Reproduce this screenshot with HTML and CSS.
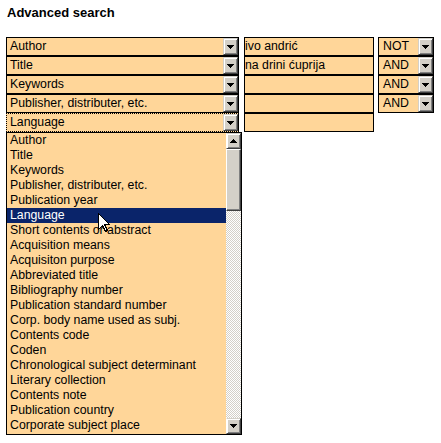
FILE: index.html
```html
<!DOCTYPE html>
<html>
<head>
<meta charset="utf-8">
<link rel="stylesheet" href="styles.css">
</head>
<body>
<div class="page">
  <h1 class="title">Advanced search</h1>
  <div class="form">
    <div class="row">
      <div class="combo field"><span class="combo-text">Author</span><span class="btn"><svg class="arrow" width="7" height="4" viewBox="0 0 7 4"><rect x="0" y="0" width="7" height="1"/><rect x="1" y="1" width="5" height="1"/><rect x="2" y="2" width="3" height="1"/><rect x="3" y="3" width="1" height="1"/></svg></span></div>
      <div class="textbox">ivo andrić</div>
      <div class="combo op"><span class="combo-text">NOT</span><span class="btn"><svg class="arrow" width="7" height="4" viewBox="0 0 7 4"><rect x="0" y="0" width="7" height="1"/><rect x="1" y="1" width="5" height="1"/><rect x="2" y="2" width="3" height="1"/><rect x="3" y="3" width="1" height="1"/></svg></span></div>
    </div>
    <div class="row">
      <div class="combo field"><span class="combo-text">Title</span><span class="btn"><svg class="arrow" width="7" height="4" viewBox="0 0 7 4"><rect x="0" y="0" width="7" height="1"/><rect x="1" y="1" width="5" height="1"/><rect x="2" y="2" width="3" height="1"/><rect x="3" y="3" width="1" height="1"/></svg></span></div>
      <div class="textbox">na drini ćuprija</div>
      <div class="combo op"><span class="combo-text">AND</span><span class="btn"><svg class="arrow" width="7" height="4" viewBox="0 0 7 4"><rect x="0" y="0" width="7" height="1"/><rect x="1" y="1" width="5" height="1"/><rect x="2" y="2" width="3" height="1"/><rect x="3" y="3" width="1" height="1"/></svg></span></div>
    </div>
    <div class="row">
      <div class="combo field"><span class="combo-text">Keywords</span><span class="btn"><svg class="arrow" width="7" height="4" viewBox="0 0 7 4"><rect x="0" y="0" width="7" height="1"/><rect x="1" y="1" width="5" height="1"/><rect x="2" y="2" width="3" height="1"/><rect x="3" y="3" width="1" height="1"/></svg></span></div>
      <div class="textbox"></div>
      <div class="combo op"><span class="combo-text">AND</span><span class="btn"><svg class="arrow" width="7" height="4" viewBox="0 0 7 4"><rect x="0" y="0" width="7" height="1"/><rect x="1" y="1" width="5" height="1"/><rect x="2" y="2" width="3" height="1"/><rect x="3" y="3" width="1" height="1"/></svg></span></div>
    </div>
    <div class="row">
      <div class="combo field"><span class="combo-text">Publisher, distributer, etc.</span><span class="btn"><svg class="arrow" width="7" height="4" viewBox="0 0 7 4"><rect x="0" y="0" width="7" height="1"/><rect x="1" y="1" width="5" height="1"/><rect x="2" y="2" width="3" height="1"/><rect x="3" y="3" width="1" height="1"/></svg></span></div>
      <div class="textbox"></div>
      <div class="combo op"><span class="combo-text">AND</span><span class="btn"><svg class="arrow" width="7" height="4" viewBox="0 0 7 4"><rect x="0" y="0" width="7" height="1"/><rect x="1" y="1" width="5" height="1"/><rect x="2" y="2" width="3" height="1"/><rect x="3" y="3" width="1" height="1"/></svg></span></div>
    </div>
    <div class="row">
      <div class="combo field focused"><span class="combo-text">Language</span><span class="btn"><svg class="arrow" width="7" height="4" viewBox="0 0 7 4"><rect x="0" y="0" width="7" height="1"/><rect x="1" y="1" width="5" height="1"/><rect x="2" y="2" width="3" height="1"/><rect x="3" y="3" width="1" height="1"/></svg></span></div>
      <div class="textbox"></div>
    </div>
    <div class="list">
      <ul class="items">
        <li>Author</li>
        <li>Title</li>
        <li>Keywords</li>
        <li>Publisher, distributer, etc.</li>
        <li>Publication year</li>
        <li class="selected">Language</li>
        <li>Short contents or abstract</li>
        <li>Acquisition means</li>
        <li>Acquisiton purpose</li>
        <li>Abbreviated title</li>
        <li>Bibliography number</li>
        <li>Publication standard number</li>
        <li>Corp. body name used as subj.</li>
        <li>Contents code</li>
        <li>Coden</li>
        <li>Chronological subject determinant</li>
        <li>Literary collection</li>
        <li>Contents note</li>
        <li>Publication country</li>
        <li>Corporate subject place</li>
      </ul>
      <div class="scrollbar">
        <span class="sbtn"><svg class="arrow" width="7" height="4" viewBox="0 0 7 4"><rect x="3" y="0" width="1" height="1"/><rect x="2" y="1" width="3" height="1"/><rect x="1" y="2" width="5" height="1"/><rect x="0" y="3" width="7" height="1"/></svg></span>
        <span class="thumb"></span>
        <span class="track"></span>
        <span class="sbtn"><svg class="arrow" width="7" height="4" viewBox="0 0 7 4"><rect x="0" y="0" width="7" height="1"/><rect x="1" y="1" width="5" height="1"/><rect x="2" y="2" width="3" height="1"/><rect x="3" y="3" width="1" height="1"/></svg></span>
      </div>
    </div>
  </div>
  <svg class="cursor" width="13" height="20" viewBox="0 0 13 20"><path d="M0.5 0.5 V16.5 L4.5 12.5 L7.5 18.5 L9.5 17.5 L6.5 11.5 H11.5 Z" fill="#fff" stroke="#000" stroke-width="1" shape-rendering="crispEdges"/></svg>
</div>
</body>
</html>
```

FILE: styles.css
```css
* { box-sizing: border-box; }
html, body { margin: 0; padding: 0; background: #fff; }
body { font-family: "Liberation Sans", Arial, sans-serif; font-size: 12.3px; color: #000; }

.page { position: relative; padding: 5px 0 0 6px; width: 441px; height: 443px; }

.title { margin: 0 0 17px 1px; font-size: 13px; font-weight: bold; line-height: 15px; }

.form { display: flex; flex-direction: column; align-items: flex-start; }

.row { display: flex; height: 19px; }

.combo { display: flex; height: 19px; border: 1px solid #000; background: #ffd699; }
.field { width: 233px; }
.op { width: 56px; margin-left: 4px; }
.combo-text { flex: 1; padding-left: 3px; line-height: 17px; white-space: nowrap; overflow: hidden; }
.op .combo-text { padding-left: 4px; }
.focused { border-style: dotted; border-right-style: solid; }

.btn, .sbtn {
  display: flex; align-items: center; justify-content: center;
  background: #d4d0c8;
  border: 1px solid; border-color: #d4d0c8 #404040 #404040 #d4d0c8;
  box-shadow: inset 1px 1px #fff, inset -1px -1px #808080;
}
.btn { width: 15px; height: 17px; }
.arrow { display: block; fill: #000; shape-rendering: crispEdges; }

.textbox { width: 130px; height: 19px; margin-left: 5px; border: 1px solid #000; background: #ffd699; line-height: 17px; padding-left: 0; white-space: nowrap; }

.list { display: flex; width: 236px; height: 303px; border: 1px solid #000; background: #ffd699; }
.items { flex: 1; margin: 0; padding: 0; list-style: none; }
.items li { height: 15px; line-height: 15px; padding-left: 3px; white-space: nowrap; }
.items li.selected { background: #0a246a; color: #fff; }

.scrollbar { display: flex; flex-direction: column; width: 15px; }
.sbtn { width: 15px; height: 16px; border-left-color: #fff; box-shadow: inset 1px 1px #fff, inset -1px -1px #808080; }
.thumb { height: 62px; background: #d4d0c8; border: 1px solid; border-color: #fff #404040 #404040 #fff; box-shadow: inset -1px -1px #808080; }
.track {
  flex: 1;
  background-color: #fff;
  background-image: conic-gradient(#d4d0c8 25%, #fff 0 50%, #d4d0c8 0 75%, #fff 0);
  background-size: 2px 2px;
}

.cursor { position: absolute; left: 98px; top: 213px; }
```
